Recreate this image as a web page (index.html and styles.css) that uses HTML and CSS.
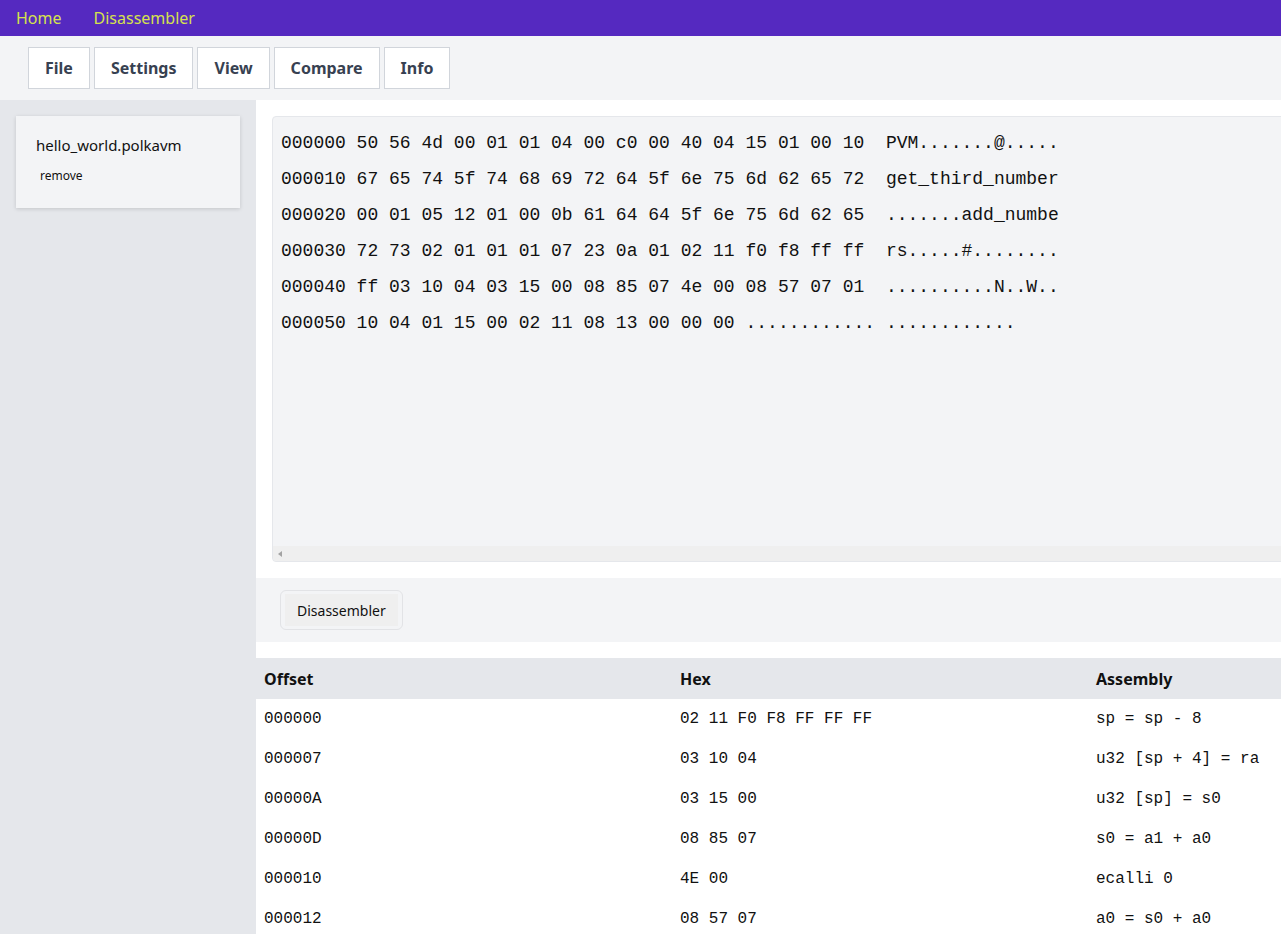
FILE: index.html
```html
<!DOCTYPE html>
<html>
<head>
<meta charset="utf-8">
<title>Disassembler</title>
<link rel="stylesheet" href="styles.css">
</head>
<body>
<nav class="topbar">
  <a class="toplink" href="#">Home</a>
  <a class="toplink" href="#">Disassembler</a>
</nav>
<div class="toolbar">
  <button class="tbtn">File</button>
  <button class="tbtn">Settings</button>
  <button class="tbtn">View</button>
  <button class="tbtn">Compare</button>
  <button class="tbtn">Info</button>
</div>
<div class="layout">
  <aside class="sidebar">
    <div class="filecard">
      <div class="filename">hello_world.polkavm</div>
      <button class="remove">remove</button>
    </div>
  </aside>
  <main class="main">
    <div class="hexpanel">
      <pre class="hex">000000 50 56 4d 00 01 01 04 00 c0 00 40 04 15 01 00 10  PVM.......@.....
000010 67 65 74 5f 74 68 69 72 64 5f 6e 75 6d 62 65 72  get_third_number
000020 00 01 05 12 01 00 0b 61 64 64 5f 6e 75 6d 62 65  .......add_numbe
000030 72 73 02 01 01 01 07 23 0a 01 02 11 f0 f8 ff ff  rs.....#........
000040 ff 03 10 04 03 15 00 08 85 07 4e 00 08 57 07 01  ..........N..W..
000050 10 04 01 15 00 02 11 08 13 00 00 00 ............ ............</pre>
      <div class="hscroll"><span class="arrow"></span></div>
    </div>
    <div class="actionbar">
      <div class="btnwrap"><button class="dbtn">Disassembler</button></div>
    </div>
    <table class="dis">
      <thead>
        <tr><th>Offset</th><th>Hex</th><th>Assembly</th></tr>
      </thead>
      <tbody>
        <tr><td>000000</td><td>02 11 F0 F8 FF FF FF</td><td>sp = sp - 8</td></tr>
        <tr><td>000007</td><td>03 10 04</td><td>u32 [sp + 4] = ra</td></tr>
        <tr><td>00000A</td><td>03 15 00</td><td>u32 [sp] = s0</td></tr>
        <tr><td>00000D</td><td>08 85 07</td><td>s0 = a1 + a0</td></tr>
        <tr><td>000010</td><td>4E 00</td><td>ecalli 0</td></tr>
        <tr><td>000012</td><td>08 57 07</td><td>a0 = s0 + a0</td></tr>
      </tbody>
    </table>
  </main>
</div>
</body>
</html>
```
FILE: styles.css
```css
html, body {
  margin: 0;
  padding: 0;
  overflow: hidden;
}
body {
  font-family: "Noto Sans", "Open Sans", sans-serif;
  color: #111827;
  background: #ffffff;
  width: 1281px;
  height: 934px;
}
.topbar {
  height: 36px;
  background: #5529c0;
  display: flex;
  align-items: center;
  padding-left: 16px;
  gap: 32px;
}
.toplink {
  color: #d6e24c;
  text-decoration: none;
  font-size: 16px;
  line-height: 20px;
}
.toolbar {
  height: 64px;
  box-sizing: border-box;
  background: #f3f4f6;
  display: flex;
  align-items: flex-start;
  padding: 11px 0 0 28px;
  gap: 4px;
}
.tbtn {
  height: 42px;
  box-sizing: border-box;
  background: #ffffff;
  border: 1px solid #d1d5db;
  border-radius: 0;
  padding: 0 16px;
  font-family: "Noto Sans", sans-serif;
  font-weight: 700;
  font-size: 16px;
  color: #374151;
}
.layout {
  display: flex;
  align-items: stretch;
  height: 834px;
}
.sidebar {
  width: 256px;
  flex: 0 0 256px;
  background: #e5e7eb;
  padding: 16px;
  box-sizing: border-box;
}
.filecard {
  width: 224px;
  height: 92px;
  box-sizing: border-box;
  background: #f3f4f6;
  box-shadow: 0 1px 4px rgba(0,0,0,0.15);
  padding: 17px 20px 0 20px;
}
.filename {
  font-size: 15px;
  line-height: 24px;
  color: #111;
}
.remove {
  display: block;
  margin-top: 10px;
  background: none;
  border: none;
  padding: 0 4px;
  font-family: "Noto Sans", sans-serif;
  font-size: 12px;
  line-height: 18px;
  color: #111;
}
.main {
  flex: 0 0 1248px;
  width: 1248px;
  padding-top: 16px;
  box-sizing: border-box;
}
.hexpanel {
  margin: 0 16px;
  height: 446px;
  box-sizing: border-box;
  background: #f3f4f6;
  border: 1px solid #e5e7eb;
  border-radius: 4px;
  display: flex;
  flex-direction: column;
}
.hex {
  flex: 1;
  margin: 0;
  padding: 8px 8px;
  font-family: "Liberation Mono", monospace;
  font-size: 18px;
  line-height: 36px;
  color: #111;
  white-space: pre;
}
.hscroll {
  height: 15px;
  background: #efefef;
  border-bottom-left-radius: 4px;
  display: flex;
  align-items: center;
  padding-left: 5px;
}
.arrow {
  width: 0;
  height: 0;
  border-top: 3px solid transparent;
  border-bottom: 3px solid transparent;
  border-right: 4px solid #a3a3a3;
}
.actionbar {
  margin-top: 16px;
  height: 64px;
  background: #f3f4f6;
  padding: 12px 24px;
  box-sizing: border-box;
}
.btnwrap {
  display: inline-flex;
  border: 1px solid #e2e3e6;
  border-radius: 6px;
  padding: 3px 4px;
}
.dbtn {
  height: 32px;
  background: #efefef;
  border: none;
  padding: 0 12px;
  font-family: "Noto Sans", sans-serif;
  font-size: 14px;
  color: #111;
}
.dis {
  margin-top: 16px;
  width: 1248px;
  border-collapse: collapse;
  table-layout: fixed;
}
.dis th {
  background: #e5e7eb;
  height: 41px;
  text-align: left;
  padding: 0 8px;
  font-size: 16px;
  font-weight: 700;
  color: #111;
}
.dis td {
  height: 40px;
  padding: 0 8px;
  font-family: "Liberation Mono", monospace;
  font-size: 16px;
  color: #111;
}
```
